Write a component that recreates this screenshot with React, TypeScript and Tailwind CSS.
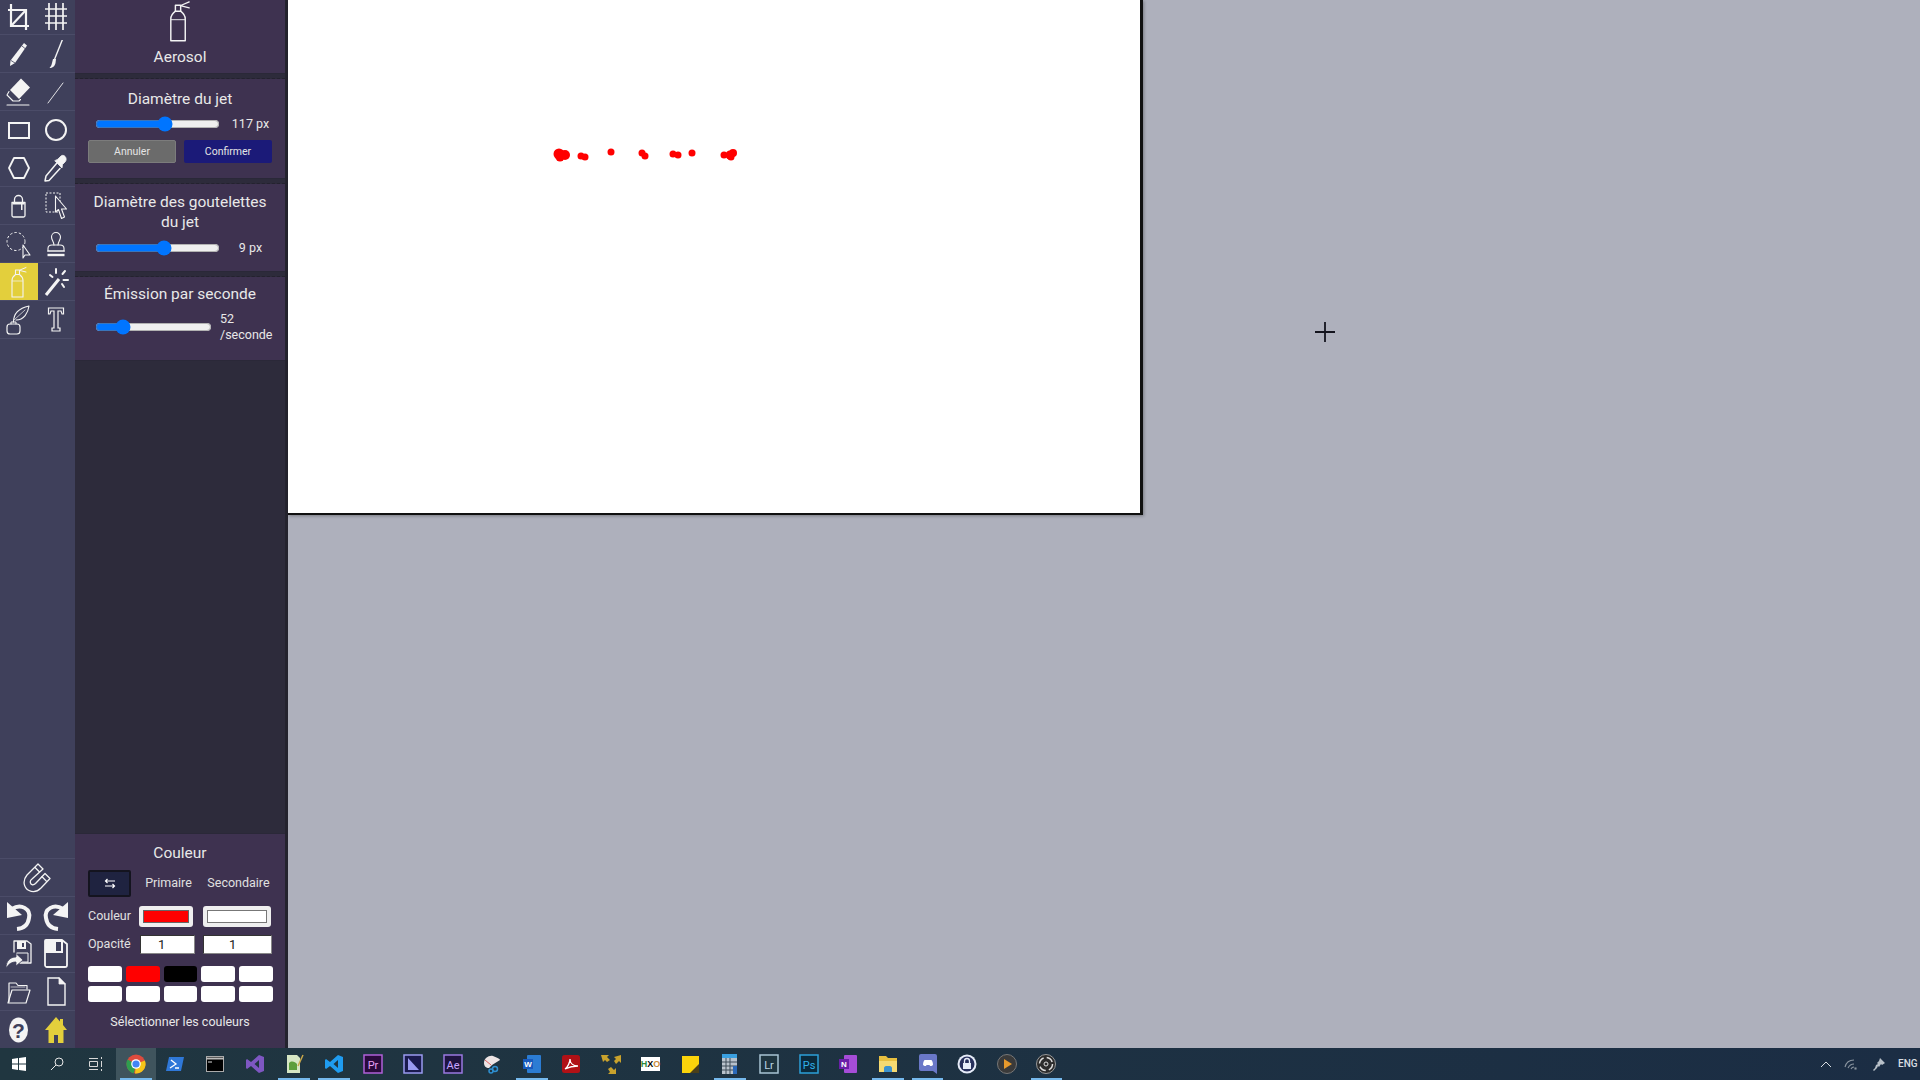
import React from "react";

const S = "#f4f4f4";
const TB = "#3f405b";

function Ic({ children, size = 32, vb = 32 }: { children: React.ReactNode; size?: number; vb?: number }) {
  return (
    <svg width={size} height={size} viewBox={`0 0 ${vb} ${vb}`} fill="none" stroke={S} strokeWidth="2" strokeLinecap="round" strokeLinejoin="round">
      {children}
    </svg>
  );
}

const Crop = () => (
  <Ic>
    <path d="M5 10h18v20M8 4v22h18" strokeWidth="2.200" strokeLinecap="butt" strokeLinejoin="miter" />
    <path d="M8 26 23 10" strokeWidth="2.200" strokeLinecap="butt" />
  </Ic>
);
const Grid = () => (
  <Ic>
    <path d="M9 3v27M16 3v27M23 3v27M5 9h22M5 16h22M5 23h22" strokeWidth="1.700" strokeLinecap="butt" />
  </Ic>
);
const Pencil = () => (
  <Ic>
    <path d="M21 5l3 2.500L12 25l-5 3 .500-5.500z" fill={S} stroke="none" />
    <path d="M8 22.500 12 25" stroke={TB} strokeWidth="0.800" />
    <path d="M19 8l3 2.500" stroke={TB} strokeWidth="0.800" />
  </Ic>
);
const Brush = () => (
  <Ic>
    <path d="M23 2 15 22l-1.500 0L21.500 2z" fill={S} stroke="none" />
    <path d="M13 21h3l-.500 4c-.500 3-3 5-6 5 1.500-1.500 2-3 2.500-5z" fill={S} stroke="none" />
  </Ic>
);
const Eraser = () => (
  <Ic>
    <path d="M18 2.500 27 11.500 16 23 7 14z" fill={S} stroke="none" />
    <path d="M6 15.500 4 19l6 6h6l1.500-1.500M4 29h22" strokeWidth="1.100" />
  </Ic>
);
const Line = () => (
  <Ic>
    <path d="M8 27 23 7" strokeWidth="0.900" />
  </Ic>
);
const Rect = () => (
  <Ic>
    <rect x="6" y="9" width="20" height="15" strokeWidth="2" strokeLinejoin="miter" />
  </Ic>
);
const Circle = () => (
  <Ic>
    <circle cx="16" cy="16" r="10" strokeWidth="2" />
  </Ic>
);
const Hex = () => (
  <Ic>
    <path d="M11 6h10l5 10-5 10H11L6 16z" strokeWidth="1.800" />
  </Ic>
);
const Dropper = () => (
  <Ic>
    <path d="M16.500 11.500 6 24l-1 5 4-.500 11-12" strokeWidth="1.500" />
    <path d="M15 9 22 16l.500-3.500 2.500-2.500c3-3-.500-8.500-4-6l-3 3z" fill={S} stroke={S} strokeWidth="0.800" />
  </Ic>
);
const Lock = () => (
  <Ic>
    <path d="M11.500 12V9.500a4 4 0 0 1 8 0V12" strokeWidth="1.300" />
    <path d="M9 12.500h13v13a1.500 1.500 0 0 1-1.500 1.500h-10A1.500 1.500 0 0 1 9 25.500z" strokeWidth="1.300" />
    <path d="M9.500 13h12v1.500h-2V20h-1.500v-5.500h-8.500z" fill={S} stroke="none" />
  </Ic>
);
const DashRect = () => (
  <Ic>
    <rect x="6" y="3" width="14" height="19" strokeWidth="1" strokeDasharray="2 1.500" strokeLinecap="butt" />
    <path d="M17 6v16l3-2.500 3 9 3-1.500-3-8h5z" fill={TB} strokeWidth="1.100" transform="translate(-1.500 0) scale(1 1)" />
  </Ic>
);
const DashCircle = () => (
  <Ic>
    <circle cx="13" cy="13.500" r="9" strokeWidth="1" strokeDasharray="2.500 2" strokeLinecap="butt" />
    <path d="M20 17v13l2-3h5z" fill={TB} strokeWidth="1.100" />
  </Ic>
);
const Stamp = () => (
  <Ic>
    <path d="M14 17c0-3-2.500-5-2.500-8a4.500 4.500 0 0 1 9 0c0 3-2.500 5-2.500 8" strokeWidth="1.100" />
    <path d="M8 23v-2.500c0-2 1.500-3.500 4-3.500h8c2.500 0 4 1.500 4 3.500V23z" strokeWidth="1.100" />
    <path d="M7.500 23h17" strokeWidth="1.100" />
    <path d="M7.500 27h17" strokeWidth="2.400" strokeLinecap="butt" />
  </Ic>
);
const Aerosol = ({ size = 32 }: { size?: number }) => (
  <Ic size={size}>
    <path d="M9 14.500c0-3 1.500-4.500 3.500-6h4c2 1.500 3.500 3 3.500 6V31H9z" strokeWidth="1.100" strokeLinejoin="round" />
    <path d="M9.500 15h10" strokeWidth="0.700" />
    <path d="M12.500 8.500V4h4v4.500" strokeWidth="1.100" />
    <path d="M17 4 23 1.500M17 4.500 23 6" strokeWidth="1" />
  </Ic>
);
const Wand = () => (
  <Ic>
    <path d="M6 29 19 13" strokeWidth="3" strokeLinecap="butt" />
    <path d="M16 3v4M25 5l-2.500 3M28 14h-4.500M24 21l-2-3M10 9l2.500 2" strokeWidth="2" />
  </Ic>
);
const Ink = () => (
  <Ic>
    <path d="M4 23c0-2 1-3 3-3h7c2 0 3 1 3 3v4c0 2-1 3-3 3H7c-2 0-3-1-3-3z" strokeWidth="1.200" />
    <path d="M8 20v-2h5v2" strokeWidth="1" />
    <path d="M10.500 18c0-9 6-14 15.500-16-1 7-5 14-13 14" strokeWidth="1.100" />
    <path d="M11 16 22 6" strokeWidth="0.700" />
  </Ic>
);
const TT = () => (
  <Ic>
    <path d="M8.500 4h15v6h-1.500l-1-3h-3v17h2v3h-8v-3h2V7h-3l-1 3H8.500z" strokeWidth="1.200" strokeLinejoin="miter" />
  </Ic>
);
const Magnet = () => (
  <Ic>
    <path d="M16 2 5 13C0 19 2 26 7 28.500c5 2.500 9 .500 12-2.500l9-9.500-5-5-9.500 10c-2 2-4.500 1.500-5 -.500-.500-1.500 0-3 1.500-4L21 7z" strokeWidth="1.300" />
    <path d="M12.800 5.200 17.800 10.300M19.600 14.300 24.800 19.600" strokeWidth="1.300" strokeLinecap="butt" />
  </Ic>
);
const Undo = () => (
  <Ic>
    <path d="M9 9C18 3 28 9 26 18 25 25 20 28.500 14 29" strokeWidth="4" strokeLinecap="butt" />
    <path d="M4 2v16l15-3z" fill={S} stroke="none" />
  </Ic>
);
const Redo = () => (
  <Ic>
    <path d="M23 9C14 3 4 9 6 18 7 25 12 28.500 18 29" strokeWidth="4" strokeLinecap="butt" />
    <path d="M28 2v16l-15-3z" fill={S} stroke="none" />
  </Ic>
);
const SaveAs = () => (
  <Ic>
    <path d="M11 3h13l4 3v19H17M11 3v11" strokeWidth="1.300" />
    <path d="M14 3h9v8h-9z" fill={S} stroke="none" />
    <path d="M19 5h2v4h-2z" fill={TB} stroke="none" />
    <path d="M14 15h11v9H14z" strokeWidth="1" />
    <path d="M3 30c0-7 4-11 10-11v-3.500l7 6.500-7 6v-4c-4 0-7 1.500-10 6z" fill={S} stroke={TB} strokeWidth="0.800" />
  </Ic>
);
const Save = () => (
  <Ic>
    <path d="M6 2h16l5 4v21a2 2 0 0 1-2 2H7a2 2 0 0 1-2-2V3a1 1 0 0 1 1-1z" strokeWidth="1.800" />
    <path d="M5 2h18v13H5z" fill={S} stroke="none" />
    <path d="M6 17h20v11H6z" fill={TB} stroke="none" />
    <path d="M16 4h5v9h-5z" fill={TB} stroke="none" />
  </Ic>
);
const Folder = () => (
  <Ic>
    <path d="M6 26V7h7l2 2.500h9v3.500" strokeWidth="1.200" />
    <path d="M5 27 9 14h18l-4 13z" strokeWidth="1.200" />
    <path d="M8 11h14" strokeWidth="0.700" />
  </Ic>
);
const NewFile = () => (
  <Ic>
    <path d="M8 2h11l6 6v21H8z" strokeWidth="1.400" strokeLinejoin="miter" />
    <path d="M19 2v6h6z" fill={S} strokeWidth="0.800" />
  </Ic>
);
const Help = () => (
  <Ic>
    <ellipse cx="15.500" cy="16" rx="9.500" ry="12.500" fill={S} stroke="none" />
    <text x="15.500" y="24" fontSize="21" fontWeight="900" fill={TB} stroke="none" textAnchor="middle" fontFamily="Liberation Sans">?</text>
  </Ic>
);
const Home = () => (
  <svg width="32" height="32" viewBox="0 0 32 32">
    <path d="M16 3 5 16h3.500v13h5.500v-8h4v8h5.500V16H27l-4-5V5h-3v2.500z" fill="#e3cf3c" />
  </svg>
);

function Cell({ children, active }: { children: React.ReactNode; active?: boolean }) {
  return (
    <div className={`flex flex-1 items-center justify-center ${active ? "bg-[#e3cf3c]" : ""}`}>{children}</div>
  );
}
function Row({ a, b, active }: { a: React.ReactNode; b?: React.ReactNode; active?: boolean }) {
  return (
    <div className="flex h-[38px] border-b border-[#4b4c68]">
      <Cell active={active}>{a}</Cell>
      {b !== undefined && <Cell>{b}</Cell>}
    </div>
  );
}

function Slider({ value, max, width }: { value: number; max: number; width: string }) {
  return <input type="range" readOnly min={0} max={max} value={value} className={`${width} h-4 accent-[#0075ff] m-0 shrink-0`} />;
}

function Card({ title, className, children }: { title: React.ReactNode; className: string; children: React.ReactNode }) {
  return (
    <section className={`bg-[#3e3250] border-b border-[#2a2838] ${className}`}>
      <h2 className="text-center text-[15.500px] leading-5 text-[#e8e8e8] font-normal">{title}</h2>
      {children}
    </section>
  );
}

const Sep = () => (
  <div className="h-[5px] bg-[#2d2b3b] border-b border-dashed border-[#24222f]" />
);

const taskIcon = "w-[39.600px] h-8 flex items-center justify-center shrink-0 relative";

function Under({ on }: { on?: boolean }) {
  return on ? <div className="absolute bottom-0 left-[4px] right-[4px] h-[2px] bg-[#76b9ed]" /> : null;
}

function Box({ bg, fg, border, t }: { bg: string; fg: string; border: string; t: string }) {
  return (
    <svg width="20" height="20" viewBox="0 0 20 20">
      <rect x="1" y="1" width="18" height="18" fill={bg} stroke={border} strokeWidth="1.500" />
      <text x="10" y="14.500" textAnchor="middle" fontSize="11" fontFamily="Roboto" fill={fg}>{t}</text>
    </svg>
  );
}

const taskbar: { el: React.ReactNode; on?: boolean }[] = [
  {
    on: true,
    el: (
      <svg width="20" height="20" viewBox="0 0 20 20">
        <circle cx="10" cy="10" r="9.500" fill="#dd4b3e" />
        <path d="M10 10 1.500 5.500A9.500 9.500 0 0 0 8 19.300z" fill="#2e9e4f" />
        <path d="M10 10 18.900 6.500A9.500 9.500 0 0 1 9 19.500z" fill="#f5c518" />
        <circle cx="10" cy="10" r="4.800" fill="#fff" />
        <circle cx="10" cy="10" r="3.600" fill="#4285f4" />
      </svg>
    ),
  },
  {
    el: (
      <svg width="20" height="20" viewBox="0 0 20 20">
        <path d="M4 3h15l-3 14H1z" fill="#2f78d8" />
        <path d="M6 6l5 4-6 4M10 14h4" stroke="#fff" strokeWidth="1.300" fill="none" />
      </svg>
    ),
  },
  {
    el: (
      <svg width="18" height="16" viewBox="0 0 18 16">
        <rect x="0.500" y="0.500" width="17" height="15" fill="#000" stroke="#aaa" />
        <path d="M0 2.500h18" stroke="#bbb" strokeWidth="2" />
        <path d="M2 6h4" stroke="#ddd" />
      </svg>
    ),
  },
  {
    el: (
      <svg width="20" height="20" viewBox="0 0 20 20">
        <path d="M14 1 19 3v14l-5 2-8-7-4 3-1-1V6l1-1 4 3zM14 6 9.500 10 14 14z" fill="#7e57c2" />
      </svg>
    ),
  },
  {
    on: true,
    el: (
      <svg width="20" height="20" viewBox="0 0 20 20">
        <path d="M3 1h10l3 3v15H3z" fill="#d6e6c4" />
        <path d="M5 9c3-3 6-1 8 1v6H5z" fill="#5d9e3c" />
        <path d="M14 12 19 1" stroke="#c9a74a" strokeWidth="1.500" />
      </svg>
    ),
  },
  {
    on: true,
    el: (
      <svg width="20" height="20" viewBox="0 0 20 20">
        <path d="M14 1 19 3v14l-5 2-8-7-4 3-1-1V6l1-1 4 3zM14 6 9.500 10 14 14z" fill="#1f9cf0" />
      </svg>
    ),
  },
  { el: <Box bg="#2a0a3c" fg="#e6a0f5" border="#b060d8" t="Pr" /> },
  {
    el: (
      <svg width="20" height="20" viewBox="0 0 20 20">
        <rect x="1" y="1" width="18" height="18" fill="#1a1a4e" stroke="#9a9af0" strokeWidth="1.500" />
        <path d="M5 4 16 16H5z" fill="#9a9af0" />
      </svg>
    ),
  },
  { el: <Box bg="#1f1440" fg="#c9a6ff" border="#9a78e0" t="Ae" /> },
  {
    el: (
      <svg width="20" height="20" viewBox="0 0 20 20">
        <path d="M2 9c0-5 5-8 9-7 3 1 7 3 7 4l-8 5-3 3c-3 0-5-2-5-5z" fill="#ece4e4" />
        <path d="M3 6l6 5" stroke="#e06060" />
        <circle cx="13" cy="15" r="2.500" fill="none" stroke="#2e8fd0" strokeWidth="1.500" />
        <circle cx="9" cy="17" r="2" fill="none" stroke="#2e8fd0" strokeWidth="1.500" />
      </svg>
    ),
  },
  {
    on: true,
    el: (
      <svg width="20" height="20" viewBox="0 0 20 20">
        <rect x="5" y="1" width="14" height="18" rx="1" fill="#2b7cd3" />
        <rect x="1" y="5" width="10" height="10" fill="#185abd" />
        <text x="6" y="13" textAnchor="middle" fontSize="8" fontWeight="700" fontFamily="Liberation Sans" fill="#fff">W</text>
      </svg>
    ),
  },
  {
    el: (
      <svg width="20" height="20" viewBox="0 0 20 20">
        <rect x="1" y="1" width="18" height="18" rx="2.500" fill="#b11116" />
        <path d="M4 15c3-2 5-7 5-10 0 4 3 7 8 7-5 0-9 1-13 3z" fill="none" stroke="#fff" strokeWidth="1.300" />
      </svg>
    ),
  },
  {
    el: (
      <svg width="20" height="20" viewBox="0 0 20 20">
        <path d="M0 1h8L6 3l3 3-3 2-2-2-2 2zM20 1v8l-2-2-3 3-2-3 2-2-2-2zM7 20l2-2-2-3 3-2 3 3 2-2v6z" fill="#c9a22c" />
      </svg>
    ),
  },
  {
    el: (
      <div className="w-[19px] h-[14px] bg-white flex items-center justify-center text-[9px] leading-none font-bold text-black [font-family:'Liberation_Sans']">
        <span className="text-[#2e8b3d]">H</span>X<span className="text-[#c98c3c]">O</span>
      </div>
    ),
  },
  {
    el: (
      <svg width="17" height="17" viewBox="0 0 17 17">
        <rect width="17" height="17" fill="#fbd40b" />
        <path d="M17 8 8 17h9z" fill="#4a3f1a" />
      </svg>
    ),
  },
  {
    on: true,
    el: (
      <svg width="15" height="20" viewBox="0 0 15 20">
        <rect width="15" height="20" fill="#b8c2cc" />
        <rect width="15" height="4" fill="#3aa0e0" />
        <path d="M4 4v16M8 4v16M0 8h15M0 12h15M0 16h15" stroke="#3f4c58" strokeWidth="1" />
        <rect x="11" y="12" width="4" height="8" fill="#2a68b8" />
      </svg>
    ),
  },
  { el: <Box bg="#1f3540" fg="#b8d4e4" border="#a8c4d4" t="Lr" /> },
  { el: <Box bg="#0b2a3c" fg="#30b0e8" border="#2ca0d8" t="Ps" /> },
  {
    el: (
      <svg width="20" height="20" viewBox="0 0 20 20">
        <rect x="6" y="1" width="13" height="18" rx="1" fill="#a64dd8" />
        <rect x="1" y="5" width="10" height="10" fill="#6a1fa8" />
        <text x="6" y="13" textAnchor="middle" fontSize="8" fontWeight="700" fontFamily="Liberation Sans" fill="#fff">N</text>
      </svg>
    ),
  },
  {
    on: true,
    el: (
      <svg width="20" height="18" viewBox="0 0 20 18">
        <path d="M1 1h7l2 2h9v14H1z" fill="#e8c040" />
        <path d="M1 6h18v11H1z" fill="#f5da72" />
        <path d="M6 17v-4c0-1 1-2 2-2h4c1 0 2 1 2 2v4z" fill="#3c93cf" />
      </svg>
    ),
  },
  {
    on: true,
    el: (
      <svg width="18" height="20" viewBox="0 0 18 20">
        <path d="M2 0h14a2 2 0 0 1 2 2v18l-4-3H2a2 2 0 0 1-2-2V2a2 2 0 0 1 2-2z" fill="#6a78c8" />
        <path d="M4 11c0-3 1-5 2-5h6c1 0 2 2 2 5-1 1-2 1-3 1l-.500-1h-3L7 12c-1 0-2 0-3-1z" fill="#fff" />
      </svg>
    ),
  },
  {
    el: (
      <svg width="20" height="20" viewBox="0 0 20 20">
        <circle cx="10" cy="10" r="9.500" fill="#e6ecf8" />
        <circle cx="10" cy="10" r="7.500" fill="#27305c" />
        <rect x="6" y="9" width="8" height="6" fill="#e6ecf8" />
        <path d="M7.500 9V7a2.500 2.500 0 0 1 5 0v2" fill="none" stroke="#e6ecf8" strokeWidth="1.300" />
      </svg>
    ),
  },
  {
    el: (
      <svg width="20" height="20" viewBox="0 0 20 20">
        <circle cx="10" cy="10" r="9.500" fill="#3a3a3a" stroke="#777" />
        <path d="M7 5l8 5-8 5z" fill="#e89a2c" />
      </svg>
    ),
  },
  {
    on: true,
    el: (
      <svg width="20" height="20" viewBox="0 0 20 20">
        <circle cx="10" cy="10" r="9.500" fill="#2c2c2c" stroke="#999" />
        <circle cx="10" cy="10" r="6.500" fill="none" stroke="#ddd" strokeWidth="1.500" strokeDasharray="7 3.200" />
        <circle cx="10" cy="10" r="2" fill="#2c2c2c" stroke="#ddd" />
      </svg>
    ),
  },
];

const swatches = ["#ffffff", "#ff0000", "#000000", "#ffffff", "#ffffff", "#ffffff", "#ffffff", "#ffffff", "#ffffff", "#ffffff"];

const tools: [React.ReactNode, React.ReactNode, boolean?][] = [
  [<Crop />, <Grid />],
  [<Pencil />, <Brush />],
  [<Eraser />, <Line />],
  [<Rect />, <Circle />],
  [<Hex />, <Dropper />],
  [<Lock />, <DashRect />],
  [<DashCircle />, <Stamp />],
  [<Aerosol />, <Wand />, true],
  [<Ink />, <TT />],
];

const bottom: [React.ReactNode, React.ReactNode][] = [
  [<Undo />, <Redo />],
  [<SaveAs />, <Save />],
  [<Folder />, <NewFile />],
];

export default function App() {
  return (
    <div className="h-[1080px] w-[1920px] overflow-hidden flex flex-col [font-family:Roboto,sans-serif] bg-[#aeb0bc]">
      <div className="flex h-[1048px] min-h-0">
        {/* tools */}
        <aside className="w-[75px] shrink-0 bg-[#3f405b] flex flex-col justify-between">
          <div className="-mt-[3px]">
            {tools.map(([a, b, on], i) => (
              <Row key={i} a={a} b={b} active={on} />
            ))}
          </div>
          <div>
            <div className="border-t border-[#4b4c68]">
              <Row a={<Magnet />} />
            </div>
            {bottom.map(([a, b], i) => (
              <Row key={i} a={a} b={b} />
            ))}
            <div className="flex h-[37px]">
              <Cell><Help /></Cell>
              <Cell><Home /></Cell>
            </div>
          </div>
        </aside>

        {/* options panel */}
        <aside className="w-[213px] shrink-0 flex flex-col bg-[#2d2b3b] border-r-[3px] border-[#24232e]">
          <section className="h-[74px] bg-[#3e3250] border-b border-[#2a2838] flex flex-col items-center">
            <Aerosol size={42} />
            <div className="text-[15.500px] leading-5 text-[#e8e8e8] mt-[5px]">Aerosol</div>
          </section>
          <Sep />
          <Card title="Diamètre du jet" className="h-[100px] pt-[10px] px-[13px]">
            <div className="flex items-center mt-[7px] pl-[7px]">
              <Slider value={119} max={210} width="w-[125px]" />
              <span className="w-[61px] shrink-0 text-center text-[12.500px] leading-4 text-[#e8e8e8]">117 px</span>
            </div>
            <div className="flex justify-between mt-[8px]">
              <button className="w-[88px] h-[23px] bg-[#6b6b6b] border border-[#7c7c7c] rounded-[2px] text-[10.500px] text-[#e4e4e4]">Annuler</button>
              <button className="w-[88px] h-[23px] bg-[#1b1a78] rounded-[2px] text-[10.500px] text-[#e4e4e4]">Confirmer</button>
            </div>
          </Card>
          <Sep />
          <Card title={<>Diamètre des goutelettes<br />du jet</>} className="h-[88px] pt-[8px] px-[13px]">
            <div className="flex items-center mt-[8px] pl-[7px]">
              <Slider value={9} max={16} width="w-[125px]" />
              <span className="w-[61px] shrink-0 text-center text-[12.500px] leading-4 text-[#e8e8e8]">9 px</span>
            </div>
          </Card>
          <Sep />
          <Card title="Émission par seconde" className="h-[84px] pt-[7px] px-[13px]">
            <div className="flex items-center mt-[7px] pl-[7px]">
              <Slider value={20} max={100} width="w-[117px]" />
              <span className="ml-[8px] shrink-0 text-[12.500px] leading-4 text-[#e8e8e8]">52<br />/seconde</span>
            </div>
          </Card>
          <div className="flex-1" />
          <section className="h-[215px] bg-[#3e3250] border-t border-[#2a2838] px-[13px] pt-[9px]">
            <h2 className="text-center text-[15.500px] leading-5 text-[#e8e8e8] font-normal">Couleur</h2>
            <div className="flex items-center mt-[7px]">
              <button className="w-[43px] h-[27px] bg-[#1f2340] border-2 border-[#14141f] rounded-[2px] flex items-center justify-center">
                <svg width="12" height="11" viewBox="0 0 12 11" fill="none" stroke="#fff" strokeWidth="1.200">
                  <path d="M2 3h9M3.500 1 1.500 3l2 2M10 8H1M8.500 6l2 2-2 2" />
                </svg>
              </button>
              <span className="w-[75px] text-center text-[12.500px] text-[#e0e0e0]">Primaire</span>
              <span className="w-[65px] text-center text-[12.500px] text-[#e0e0e0]">Secondaire</span>
            </div>
            <div className="flex items-center mt-[9px]">
              <span className="w-[51px] text-[12.500px] text-[#e0e0e0]">Couleur</span>
              <div className="w-[54px] h-[21px] bg-[#efefef] rounded-[3px] p-[4px]">
                <div className="h-full bg-[#ff0000] border border-[#666]" />
              </div>
              <div className="w-[68px] h-[21px] ml-[10px] bg-[#efefef] rounded-[3px] p-[4px]">
                <div className="h-full bg-white border border-[#777]" />
              </div>
            </div>
            <div className="flex items-center mt-[8px]">
              <span className="w-[52px] text-[12.500px] text-[#e0e0e0]">Opacité</span>
              <div className="w-[55px] h-[19px] bg-white border-t border-l border-[#333] border-r border-b border-r-[#888] border-b-[#888] text-[13px] leading-[17px] text-[#222] pl-[17px]">1</div>
              <div className="w-[69px] h-[19px] ml-[8px] bg-white border-t border-l border-[#333] border-r border-b border-r-[#888] border-b-[#888] text-[13px] leading-[17px] text-[#222] pl-[25px]">1</div>
            </div>
            <div className="grid grid-cols-5 gap-x-[4px] gap-y-[4px] w-[185px] mt-[12px]">
              {swatches.map((c, i) => (
                <div key={i} className="h-[16px] rounded-[3px]" style={{ backgroundColor: c }} />
              ))}
            </div>
            <p className="text-center text-[12.500px] leading-4 text-[#e8e8e8] mt-[12px]">Sélectionner les couleurs</p>
          </section>
        </aside>

        {/* canvas */}
        <main className="flex-1 relative min-w-0">
          <div className="w-[855px] h-[515px] bg-white border-r-[3px] border-b-[2px] border-[#111] shadow-[1px_1px_3px_rgba(0,0,0,0.3)]">
            <svg width="480" height="170" className="block" style={{ filter: "blur(0.6px)" }}>
              <g fill="#ff0000" transform="translate(-288 0)">
                <circle cx="559" cy="154" r="5.500" /><circle cx="565" cy="155" r="5" /><circle cx="560" cy="157" r="4.500" />
                <circle cx="581" cy="156" r="3.500" /><circle cx="585" cy="157" r="3.500" />
                <circle cx="611" cy="152" r="3.500" />
                <circle cx="642" cy="153" r="3.500" /><circle cx="645" cy="156" r="3.500" />
                <circle cx="673" cy="154" r="3.500" /><circle cx="678" cy="155" r="3.500" />
                <circle cx="692" cy="153" r="3.500" />
                <circle cx="724" cy="155" r="3.500" /><circle cx="730" cy="155" r="4.500" /><circle cx="733" cy="153" r="4" /><circle cx="731" cy="157" r="3.500" />
              </g>
            </svg>
          </div>
          <svg className="absolute left-[1027px] top-[322px]" width="20" height="20" viewBox="0 0 20 20">
            <path d="M10 0v20M0 10h20" stroke="#14141e" strokeWidth="1.800" />
          </svg>
        </main>
      </div>

      {/* taskbar */}
      <footer className="h-8 flex items-center bg-gradient-to-r from-[#203640] to-[#1b2d44]">
        <div className="w-[38px] h-8 flex items-center justify-center">
          <svg width="14" height="14" viewBox="0 0 14 14" fill="#fff">
            <path d="M0 2 6 1v5.500H0zM7 .900 14 0v6.500H7zM0 7.500h6V13l-6-1zM7 7.500h7V14l-7-1z" />
          </svg>
        </div>
        <div className="w-[38px] h-8 flex items-center justify-center">
          <svg width="14" height="14" viewBox="0 0 14 14" fill="none" stroke="#e8e8e8" strokeWidth="1">
            <circle cx="9" cy="5" r="4" />
            <path d="M6 8 1 13" />
          </svg>
        </div>
        <div className="w-[40px] h-8 flex items-center justify-center">
          <svg width="14" height="14" viewBox="0 0 14 14" fill="none" stroke="#d8d8d8" strokeWidth="1">
            <path d="M0 1.500h9M0 12.500h9M.500 4.500h8v5h-8zM12.500 0v2M12.500 4v6M12.500 12v2" />
          </svg>
        </div>
        {taskbar.map((t, i) => (
          <div key={i} className={`${taskIcon} ${i === 0 ? "bg-[#3f545d]" : ""}`}>
            {t.el}
            <Under on={t.on} />
          </div>
        ))}
        <div className="flex-1" />
        <div className="flex items-center text-[#d8dde2]">
          <svg width="12" height="7" viewBox="0 0 12 7" fill="none" stroke="#d8dde2" strokeWidth="1">
            <path d="M1 6l5-5 5 5" />
          </svg>
          <svg className="ml-[12px]" width="13" height="11" viewBox="0 0 13 11" fill="none" stroke="#8a95a0" strokeWidth="1.100">
            <path d="M1 8c1-4 4-7 9-7M4 9c1-2 3-4 6-4M7 10c.500-1 1.500-2 3-2" />
            <path d="M11 9h1v1h-1z" fill="#ccc" />
          </svg>
          <svg className="ml-[15px]" width="13" height="13" viewBox="0 0 13 13" fill="#b8c0c8">
            <path d="M8 0l5 5-3 2-1-1-2 3-1-1-1 2-1 1-2 2-1-1 2-2 1-3 2-1-1-1 2-2z" />
          </svg>
          <span className="ml-[13px] w-[22px] text-[10px] leading-none font-medium whitespace-nowrap">ENG</span>
        </div>
      </footer>
    </div>
  );
}
